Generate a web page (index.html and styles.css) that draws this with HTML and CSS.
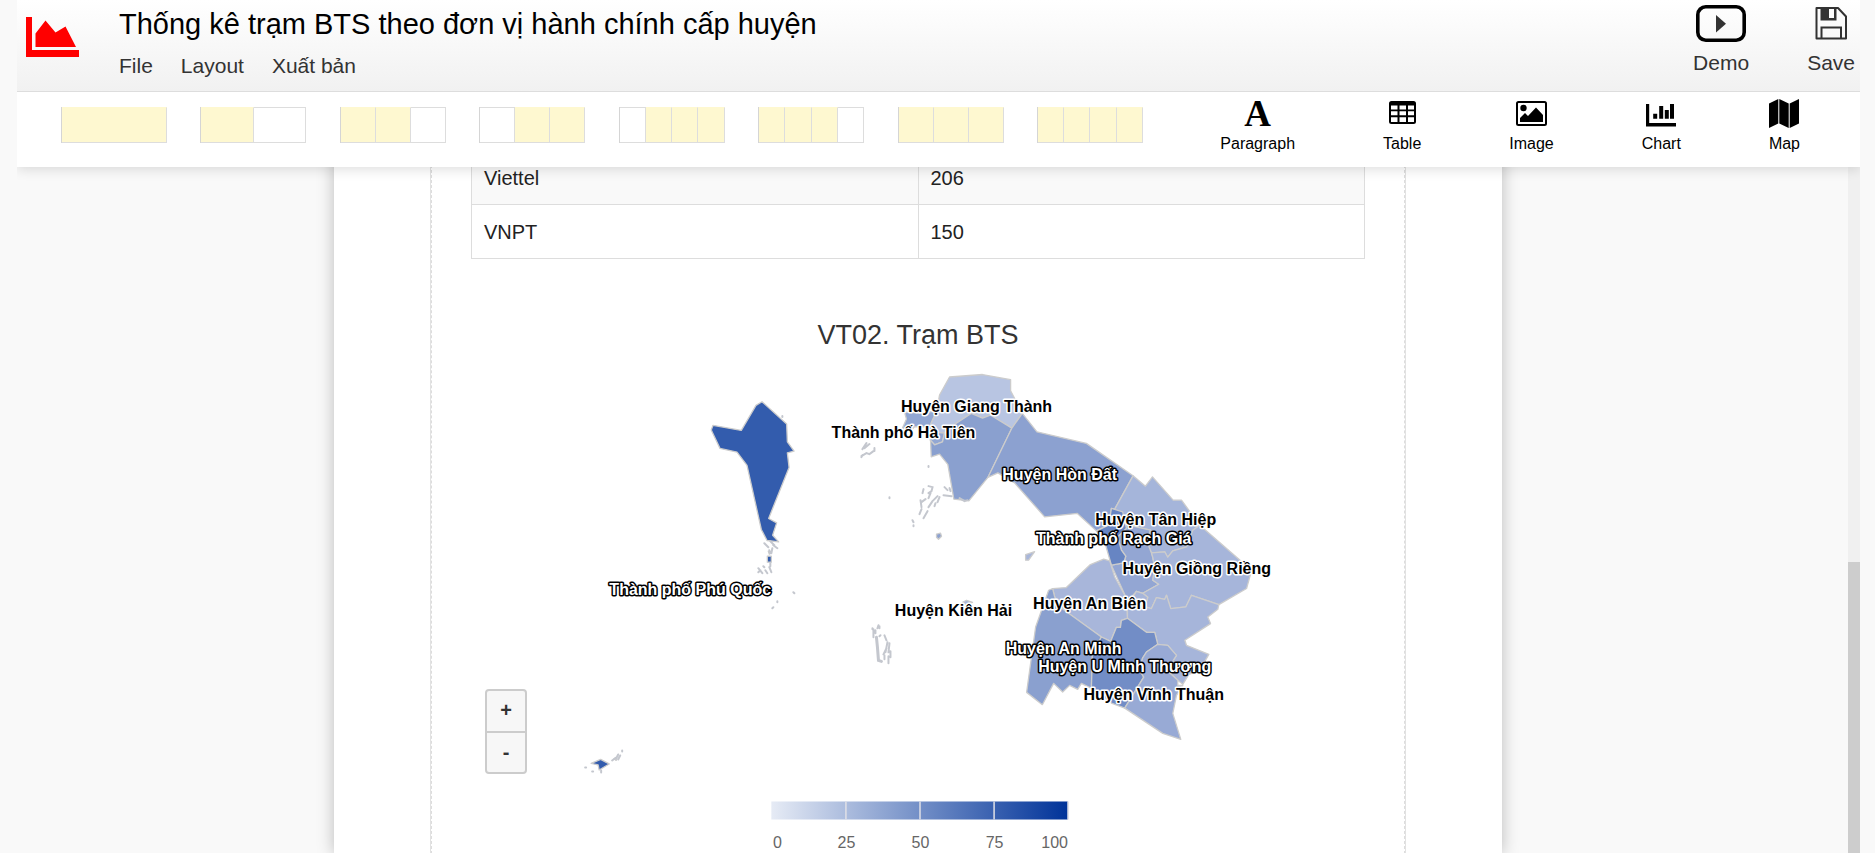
FILE: index.html
```html
<!DOCTYPE html>
<html lang="vi">
<head>
<meta charset="utf-8">
<title>Thống kê trạm BTS theo đơn vị hành chính cấp huyện</title>
<link rel="stylesheet" href="styles.css">
</head>
<body>
<div class="app">
  <header class="header">
    <svg class="logo" viewBox="0 0 53 40" aria-hidden="true">
      <path d="M0 0h6v33h47v7H0z"/><path d="M9.500 30V16.500L19.500 3.500l10 12L39.500 9.500 50 30z"/>
    </svg>
    <div class="heading">
      <h1 class="title">Thống kê trạm BTS theo đơn vị hành chính cấp huyện</h1>
      <nav class="menu">
        <button type="button">File</button>
        <button type="button">Layout</button>
        <button type="button">Xuất bản</button>
      </nav>
    </div>
    <div class="actions">
      <button type="button" class="action">
        <svg width="50" height="38" viewBox="0 0 50 38" aria-hidden="true"><rect x="1.800" y="1.800" width="46.400" height="33.400" rx="8" fill="none" stroke="#000" stroke-width="3.600"/><path d="M20 10v17.500l10-8.700z" fill="#333"/></svg>
        Demo
      </button>
      <button type="button" class="action">
        <svg width="32" height="38" viewBox="0 0 32 38" aria-hidden="true"><path d="M1.500 3h21.500l8 8.500v22h-29.500z" fill="none" stroke="#333" stroke-width="2" stroke-linejoin="round"/><path d="M5.500 3h16v12.500h-16z" fill="#333"/><path d="M14 4h5v9h-5z" fill="#fdfdfd"/><path d="M6.500 33V22.500h19.500V33" fill="none" stroke="#333" stroke-width="2"/></svg>
        Save
      </button>
    </div>
  </header>

  <div class="toolbar">
    <div class="layouts">
      <button type="button" class="cols" aria-label="1"><i class="on"></i></button>
      <button type="button" class="cols" aria-label="1-1"><i class="on"></i><i></i></button>
      <button type="button" class="cols" aria-label="2-1"><i class="on"></i><i class="on"></i><i></i></button>
      <button type="button" class="cols" aria-label="1-2"><i></i><i class="on"></i><i class="on"></i></button>
      <button type="button" class="cols" aria-label="1-3"><i></i><i class="on"></i><i class="on"></i><i class="on"></i></button>
      <button type="button" class="cols" aria-label="3-1"><i class="on"></i><i class="on"></i><i class="on"></i><i></i></button>
      <button type="button" class="cols" aria-label="1-1-1"><i class="on"></i><i class="on"></i><i class="on"></i></button>
      <button type="button" class="cols" aria-label="1-1-1-1"><i class="on"></i><i class="on"></i><i class="on"></i><i class="on"></i></button>
    </div>
    <div class="tools">
      <button type="button" class="tool"><span class="letter" aria-hidden="true">A</span>Paragraph</button>
      <button type="button" class="tool">
        <svg width="27" height="32" viewBox="0 0 27 32" aria-hidden="true"><path fill-rule="evenodd" d="M2.500 3h22a2.500 2.500 0 0 1 2.500 2.500v18a2.500 2.500 0 0 1-2.500 2.500h-22A2.500 2.500 0 0 1 0 23.500v-18A2.500 2.500 0 0 1 2.500 3zM2 7.500v4h6.500v-4zM10.500 7.500v4h6.500v-4zM19 7.500v4h6v-4zM2 13.300v4h6.500v-4zM10.500 13.300v4h6.500v-4zM19 13.300v4h6v-4zM2 19.200v4.800h6.500v-4.800zM10.500 19.200v4.800h6.500v-4.800zM19 19.200v4.800h6v-4.800z"/></svg>
        Table</button>
      <button type="button" class="tool">
        <svg width="31" height="32" viewBox="0 0 31 32" aria-hidden="true"><rect x="1" y="4" width="29" height="23" rx="1.500" fill="none" stroke="#000" stroke-width="2"/><circle cx="7.500" cy="10" r="3.200"/><path d="M4 24v-4l5-5 3 3 8-8.500 7 7.500v7z"/></svg>
        Image</button>
      <button type="button" class="tool">
        <svg width="30" height="32" viewBox="0 0 30 32" aria-hidden="true"><path d="M0 6h3.200v19H30v3.500H0zM7.200 15.700h4v5h-4zM13.200 8h4v12.700h-4zM18.800 12h4v8.700h-4zM24 6h4v14.700h-4z"/></svg>
        Chart</button>
      <button type="button" class="tool">
        <svg width="30" height="32" viewBox="0 0 30 32" aria-hidden="true"><path d="M0 5.500L9.300 1v24.500L0 30zM10.300 1l9.400 4.500V30l-9.400-4.500zM20.700 5.500L30 1v24.500L20.700 30z"/></svg>
        Map</button>
    </div>
  </div>

  <main class="workspace">
    <div class="stage">
      <article class="paper">
        <div class="frame"><div class="content">
          <table class="data">
            <tbody>
              <tr><td>Viettel</td><td>206</td></tr>
              <tr><td>VNPT</td><td>150</td></tr>
            </tbody>
          </table>
          <section class="chart">
            <h2 class="chart-title">VT02. Trạm BTS</h2>
            <div class="map">
              <svg class="map-svg" viewBox="472 360 893 493">
                <defs>
                  <linearGradient id="scale"><stop offset="0" stop-color="#e6ebf5"/><stop offset="1" stop-color="#003399"/></linearGradient>
                </defs>
                <g class="areas">
                  <path fill="#b8c5e2" d="M950 377L983 374.500 1011 379.700V390.700L1022.700 413 1012.300 428 990.700 415 983 418 971.700 413.300 953 425.700 945 433 935 432 930.700 425 937 411.700 940 395z"/>
                  <path fill="#92a7d3" d="M905 412L920 413 937 411 930.700 425 935 432 945 433 943 441.700 935 444.700 930.700 440 931 432 926.700 426.700 915 426.700 911 431 903 428 907 419z"/>
                  <path fill="#8aa0cf" d="M953 425.700L971.700 413.300 983 418 990.700 415 1012.300 428 988.300 477.300 969.300 500.700 954.300 499 948.300 464.300 940 454 931.700 456.700 931 440 935 444.700 943 441.700 945 433z"/>
                  <path fill="#8ca1d0" d="M1022.700 413.300L1037.300 431.700 1086.700 443.300 1133.300 475.700 1115 509 1111.700 508.300 1109 525 1096.700 530.700 1077.700 513.300 1045 516.700 1015 482.700 998.300 472.700 988.300 477.300 1012.300 428z"/>
                  <path fill="#a5b5da" d="M1133.300 475.700L1145.700 486 1152.700 476.700 1173.300 500H1181.700L1200 525 1193 530 1186.700 546.700 1173 550.700 1168 557 1165 551.700 1151.700 552.700 1146.700 540 1150.700 530 1133 526 1125 521.700 1115 509z"/>
                  <path fill="#93a6d3" d="M1125 521.700L1133 526 1150.700 530 1146.700 540 1151.700 552.700 1153 557 1155 568 1153 580 1159 584 1143 593 1136.700 591 1127.700 601.700 1126.700 598 1111.700 565 1124 562.700 1126 556 1121.700 550 1118 536.700 1126.700 528z"/>
                  <path fill="#6785c3" d="M1111.700 508.300L1123 511.700 1125 521.700 1126.700 528 1118 536.700 1121.700 550 1126 556 1124 562.700 1111.700 565 1106 545 1096.700 530.700 1109 525z"/>
                  <path fill="#a6b5da" d="M1200 525L1251.700 570 1246.700 588.300 1219 604.300 1191.700 595 1186 606.700 1171 608.300 1166.700 595 1165 599 1156.700 597.300 1151.700 608.300 1145 606.700 1148 597 1143 593 1159 584 1153 580 1155 568 1153 557 1151.700 552.700 1165 551.700 1168 557 1173 550.700 1186.700 546.700 1193 530z"/>
                  <path fill="#a6b5da" d="M1127.700 606L1136.700 591 1143 593 1148 597 1145 606.700 1151.700 608.300 1156.700 597.300 1165 599 1166.700 595 1171 608.300 1186 606.700 1191.700 595 1219 604.300 1218 609 1208 616.700 1210.700 623.300 1185 640 1186.700 645 1209 654 1200 670 1189 674 1183 684 1178 680 1167 670 1176.700 655 1168 645 1158 644 1155 632H1146.700L1127.700 618z"/>
                  <path fill="#a8b6da" d="M1110 560.700L1104 559 1090.700 564.300 1066.700 587.300 1053 588.300 1055 596.700 1062 608 1101.700 636.700 1111 641 1116.700 627H1120.700L1121.700 620 1127.700 618 1126.700 598 1115 576.700z"/>
                  <path fill="#8aa0cf" d="M1053 588.300L1049 590 1036 626.700 1027 692 1042.700 704.300 1054 683 1063 691.700 1070 685 1078 689 1081.700 683 1091.700 688 1092.700 653 1101.700 636.700 1062 608 1055 596.700z"/>
                  <path fill="#728dc6" d="M1101.700 636.700L1111 641 1116.700 627H1120.700L1121.700 620 1127.700 618 1146.700 632H1155L1158 644 1146.700 651.700 1142.700 658 1140 670 1144 676.700 1125 707.700 1111.700 702.700 1091.700 688 1092.700 653z"/>
                  <path fill="#98aad5" d="M1158 644L1168 645 1176.700 655 1167 670 1178 680V685H1183L1176.700 695 1173 713 1181 739 1163 733 1125 707.700 1144 676.700 1140 670 1142.700 658 1146.700 651.700z"/>
                  <path fill="#335cad" d="M762.700 401.700L756.700 405.300 742 430.300 713.700 425.300 712 430 720.700 448.300 737.700 452 747.700 465.300 762 529.300 767.700 540.300 779.300 541.700 773.300 535 777.300 522.700 769.300 518.300 789.700 467.300 788 452.700 794.700 451 788 441.700 787.300 424z"/>
                  <path fill="#335cad" d="M592 763L601.500 759 610 763.500 600 769.500 599 764.500zM768 556h4v6h-4zM769 551l2 1-1 2zM615 758l2 0 0 2z"/>
                  <path fill="#8ca1d0" d="M937 534l4-1 1 3-3 3-2-2z"/>
                  <path fill="#a8b6da" d="M1026 554.500L1035 551.500 1029 560H1026zM963 602l4-2 6 2-7 2z"/>
                </g>
                <path class="islets" d="M783 416v1M765 543l4 4M771 541l4 4M774 545l4 3M770 550l1 3M759 568l4 5M764 566l1 1M766 570l2 3M770 567l2 5M771 563v3M773 548l-1 5M759 572l2-2M794 592l1 1M778 601v1M773 608l1-1M586 767h1M593 771h1M602 770v2M613 760l4-3M617 758l2-4M619 759l2-4M623 750v1M867 443l-4 6M870 444l-5 4M862 456l5-3 3 1 4-3M875 448v3M929 466v1M890 497v1M863 455l-1 2M929 486l4 1-1 4-3 2M924 489l-1 4M931 493l-2 5M921 500l1 7M926 499l-4 3M933 501l-4 6M938 496l-4 4M936 503l-1 3M940 497l-2 5M922 509l-2 5M928 511l-4 7M945 487l3 3M950 488l1 3M944 495l8 1M913 520l1 2M914 525v1M960 498l5 3 3-1M879 625l-1 3M874 629v8M876 633v-3M873 628v1M880 626v2M881 635l-1 1M885 635l2 5M888 642l-2 10M890 643l-1 9M887 648l-3 6M889 656v6M891 651v6M885 655v4M889 662v1"/>
                <path class="islets thick" d="M877 637l1 10 1 13 3 1"/>
                <g class="labels">
                  <text x="977" y="412">Huyện Giang Thành</text>
                  <text x="904" y="438">Thành phố Hà Tiên</text>
                  <text class="inv" x="1060" y="480">Huyện Hòn Đất</text>
                  <text x="1156" y="525">Huyện Tân Hiệp</text>
                  <text class="inv" x="1114" y="544">Thành phố Rạch Giá</text>
                  <text x="1197" y="574">Huyện Giồng Riềng</text>
                  <text x="1090" y="609">Huyện An Biên</text>
                  <text x="954" y="616">Huyện Kiên Hải</text>
                  <text class="inv" x="1064" y="654">Huyện An Minh</text>
                  <text class="inv" x="1125" y="672">Huyện U Minh Thượng</text>
                  <text x="1154" y="700">Huyện Vĩnh Thuận</text>
                  <text class="inv" x="691" y="595">Thành phố Phú Quốc</text>
                </g>
                <g class="legend">
                  <rect x="772" y="801" width="296" height="18" fill="url(#scale)"/>
                  <path d="M846.500 801v18M920.500 801v18M994.500 801v18M1068.500 801v18"/>
                  <text x="778" y="847">0</text>
                  <text x="847" y="847">25</text>
                  <text x="921" y="847">50</text>
                  <text x="995" y="847">75</text>
                  <text x="1055" y="847">100</text>
                </g>
              </svg>
              <div class="zoom">
                <button type="button">+</button>
                <button type="button">-</button>
              </div>
            </div>
          </section>
        </div></div>
      </article>
    </div>
    <div class="scroll-track"><div class="scroll-thumb"></div></div>
  </main>
</div>
</body>
</html>
```

FILE: styles.css
```css
* { box-sizing: border-box; }

body {
  margin: 0;
  background: #f9f9f9;
  color: #222;
  font-family: "Liberation Sans", Arial, sans-serif;
}

button {
  padding: 0;
  border: 0;
  background: none;
  color: inherit;
  font: inherit;
  cursor: pointer;
}

svg { display: block; }

.app {
  display: flex;
  flex-direction: column;
  height: 100vh;
  margin: 0 15px 0 17px;
  overflow: hidden;
}

.header {
  position: relative;
  z-index: 3;
  display: flex;
  align-items: flex-start;
  padding: 4px 5px 13px 9px;
  border-bottom: 1px solid #ddd;
  background: linear-gradient(#fff, #f1f1f1);
}

.logo {
  width: 53px;
  margin: 13px 40px 0 0;
  fill: #f00;
}

.heading { flex: 1; }

.title {
  margin: 0 0 10px;
  color: #000;
  font-size: 29px;
  font-weight: 400;
  line-height: 40px;
}

.menu {
  display: flex;
  gap: 28px;
  color: #333;
  font-size: 21px;
  line-height: 24px;
}

.actions {
  display: flex;
  gap: 58px;
  padding-top: 1px;
  color: #333;
  font-size: 21px;
  line-height: 24px;
}

.action {
  display: flex;
  flex-direction: column;
  align-items: center;
  gap: 8px;
}

.toolbar {
  position: relative;
  z-index: 2;
  display: flex;
  justify-content: space-between;
  align-items: flex-start;
  padding: 6px 60px 13px 44px;
  background: #fff;
  box-shadow: 0 2px 12px rgba(0, 0, 0, 0.14);
}

.layouts {
  display: flex;
  justify-content: space-between;
  flex: 0 1 1082px;
  padding-top: 9px;
}

.cols {
  display: flex;
  width: 106px;
  height: 36px;
  border-left: 1px solid #d5d5d5;
}

.cols i {
  flex: 1;
  height: 36px;
  border: solid #ddd;
  border-width: 1px 1px 1px 0;
}

.cols .on {
  border-top-color: #fef8d0;
  background: #fef8d0;
}

.tools {
  display: flex;
  gap: 88px;
  color: #000;
  font-size: 16px;
  line-height: 20px;
}

.tool {
  display: flex;
  flex-direction: column;
  align-items: center;
  gap: 4px;
}

.letter {
  height: 32px;
  font: bold 37px/32px "Liberation Serif", serif;
}

.workspace {
  display: flex;
  flex: 1;
  min-height: 0;
}

.stage {
  display: flex;
  justify-content: center;
  align-items: flex-start;
  flex: 1;
  padding-right: 29px;
  overflow: hidden;
}

.paper {
  flex: 0 1 1168px;
  margin-top: -17px;
  padding: 0 96px;
  background: #fff;
  box-shadow: 0 0 16px rgba(0, 0, 0, 0.25);
}

.frame {
  border: solid #e2e2e2;
  border-width: 0 1px;
}

.content {
  padding: 0 39px;
  border: dashed #ddd;
  border-width: 0 1px;
}

.data {
  width: 100%;
  border-collapse: collapse;
  table-layout: fixed;
  font-size: 20px;
  line-height: 24px;
}

.data td {
  height: 54px;
  padding: 0 12px;
  border: 1px solid #ddd;
}

.data tr:first-child { background: #f9f9f9; }

.chart-title {
  margin: 56px 0 5px;
  color: #333;
  font-size: 27px;
  font-weight: 400;
  line-height: 40px;
  text-align: center;
}

.map { position: relative; }

.map-svg {
  width: 100%;
  height: auto;
}

.areas {
  stroke: #ccc;
  stroke-width: 1.3;
  stroke-linejoin: round;
}

.islets {
  fill: none;
  stroke: #c4c7ce;
  stroke-width: 2;
  stroke-linecap: round;
}

.thick { stroke-width: 3; }

.labels {
  fill: #000;
  stroke: #fff;
  stroke-width: 3px;
  stroke-linejoin: round;
  paint-order: stroke;
  font-size: 16px;
  font-weight: 700;
  text-anchor: middle;
}

.inv {
  fill: #fff;
  stroke: #000;
}

.legend {
  fill: #666;
  font-size: 16px;
  text-anchor: middle;
}

.legend path { stroke: #e0e0e6; stroke-width: 1.5; }

.zoom {
  position: absolute;
  bottom: 80px;
  left: 14px;
  display: flex;
  flex-direction: column;
  width: 42px;
  border: 2px solid #ccc;
  border-radius: 4px;
  background: #f7f7f7;
  color: #333;
  font-size: 20px;
  font-weight: 700;
}

.zoom button { height: 40px; }

.zoom button + button {
  height: 41px;
  border-top: 2px solid #ccc;
}

.scroll-track {
  display: flex;
  flex-direction: column;
  justify-content: flex-end;
  width: 12px;
  background: #f0f0f0;
}

.scroll-thumb {
  height: 42.4%;
  background: #cdcdcd;
}
```
